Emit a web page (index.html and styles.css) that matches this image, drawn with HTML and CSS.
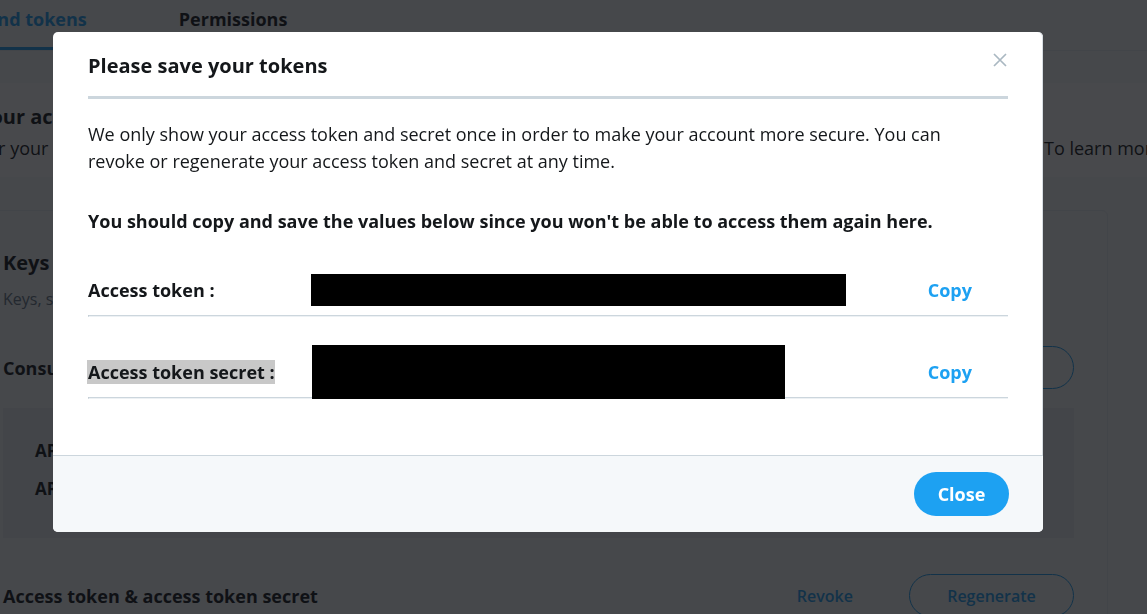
FILE: index.html
```html
<!DOCTYPE html>
<html lang="en">
<head>
<meta charset="utf-8">
<title>Keys and tokens</title>
<link rel="stylesheet" href="styles.css">
</head>
<body>
<div class="page">
  <nav class="tabs">
    <div class="tab tab-active">Keys and tokens</div>
    <div class="tab">Permissions</div>
  </nav>
  <section class="banner">
    <h2 class="banner-title">Your access token &amp; access token secret</h2>
    <div class="banner-sub">
      <span class="sub-left">For your security, we only show your access token and secret once after they are generated. Keep them somewhere safe.</span>
      <span class="sub-right">To learn more about access tokens, read our documentation.</span>
    </div>
  </section>
  <section class="card">
    <h3 class="card-title">Keys and tokens</h3>
    <p class="card-desc">Keys, secret keys and access tokens management.</p>
    <div class="card-row">
      <span class="row-title">Consumer API keys</span>
      <button class="btn-outline">Regenerate</button>
    </div>
    <div class="keys-box">
      <div class="key-line">API key:</div>
      <div class="key-line">API secret key:</div>
    </div>
    <div class="card-row card-row-last">
      <span class="row-title">Access token &amp; access token secret</span>
      <a class="link-revoke">Revoke</a>
      <button class="btn-outline">Regenerate</button>
    </div>
  </section>
</div>

<div class="overlay">
  <div class="modal">
    <div class="modal-header">
      <h1 class="modal-title">Please save your tokens</h1>
      <button class="modal-x" aria-label="Close">
        <svg width="14" height="14" viewBox="0 0 14 14"><path d="M1 1 L13 13 M13 1 L1 13" stroke="#aab8c2" stroke-width="1.7" fill="none"/></svg>
      </button>
    </div>
    <div class="modal-body">
      <p class="intro">We only show your access token and secret once in order to make your account more secure. You can revoke or regenerate your access token and secret at any time.</p>
      <p class="warning">You should copy and save the values below since you won't be able to access them again here.</p>
      <div class="token-row">
        <span class="token-label">Access token :</span>
        <span class="token-value token-value-1"></span>
        <a class="copy">Copy</a>
      </div>
      <hr class="row-rule">
      <div class="token-row">
        <span class="token-label"><span class="selected">Access token secret :</span></span>
        <span class="token-value token-value-2"></span>
        <a class="copy">Copy</a>
      </div>
      <hr class="row-rule">
    </div>
    <div class="modal-footer">
      <button class="btn-close">Close</button>
    </div>
  </div>
</div>
</body>
</html>
```
FILE: styles.css
```css
* { box-sizing: border-box; }

body {
  margin: 0;
  width: 1147px;
  height: 614px;
  overflow: hidden;
  background: #f5f8fa;
  color: #14171a;
  font-family: "Open Sans", "Noto Sans", sans-serif;
}

/* ---------- background page ---------- */
.page {
  margin-left: -60px;
  width: 1207px;
}

.tabs {
  display: flex;
  height: 51px;
  border-bottom: 1px solid #e6ecf0;
}

.tab {
  height: 50px;
  padding-top: 7px;
  font-size: 18px;
  line-height: 24px;
  font-weight: 700;
  color: #14171a;
}

.tab-active {
  color: #1da1f2;
  border-bottom: 3px solid #1da1f2;
  margin-right: 92px;
}

.banner {
  margin-top: 32px;
  background: #fff;
  padding: 20px 0 15px 38px;
}

.banner-title {
  margin: 0;
  font-size: 20px;
  line-height: 28px;
  font-weight: 700;
}

.banner-sub {
  display: flex;
  margin-top: 4px;
  font-size: 18px;
  line-height: 27px;
  white-space: nowrap;
}

.sub-left {
  flex: 0 0 1066px;
  overflow: hidden;
}

.card {
  margin: 33px 39px 0 28px;
  border: 1px solid #e6ecf0;
  border-radius: 6px;
  padding: 38px 33px 0 34px;
  height: 420px;
}

.card-title {
  margin: 0;
  font-size: 20px;
  line-height: 28px;
  font-weight: 700;
}

.card-desc {
  margin: 10px 0 0;
  font-size: 16px;
  line-height: 24px;
  color: #657786;
}

.card-row {
  display: flex;
  align-items: center;
  margin-top: 35px;
}

.card-row-last {
  margin-top: 36px;
}

.row-title {
  flex: 1;
  font-size: 18px;
  font-weight: 700;
}

.btn-outline {
  width: 165px;
  height: 43px;
  border: 1px solid #1da1f2;
  border-radius: 22px;
  background: transparent;
  color: #1da1f2;
  font-family: inherit;
  font-size: 16px;
  font-weight: 600;
}

.link-revoke {
  margin-right: 56px;
  color: #1da1f2;
  font-size: 16px;
  font-weight: 600;
}

.keys-box {
  margin-top: 19px;
  background: #e8edf1;
  padding: 31px 32px 37px;
}

.key-line {
  font-size: 17px;
  line-height: 24px;
  font-weight: 700;
}

.key-line + .key-line {
  margin-top: 14px;
}

/* ---------- modal ---------- */
.overlay {
  position: fixed;
  inset: 0;
  background: rgba(14, 16, 20, 0.76);
  display: flex;
  align-items: flex-start;
  padding: 32px 0 0 53px;
}

.modal {
  width: 990px;
  background: #fff;
  border-radius: 5px;
  overflow: hidden;
  box-shadow: inset -1px 0 0 #d8dee3;
}

.modal-header {
  margin: 0 35px;
  padding: 20px 0 16px;
  border-bottom: 3px solid #ccd6dd;
  display: flex;
  align-items: flex-start;
}

.modal-title {
  flex: 1;
  margin: 0;
  font-size: 20px;
  line-height: 28px;
  font-weight: 700;
}

.modal-x {
  margin: 1px 1px 0 0;
  padding: 0;
  border: 0;
  background: none;
  width: 14px;
  height: 14px;
  display: flex;
}

.modal-body {
  padding: 0 35px 56px;
  font-size: 18px;
  line-height: 27px;
}

.intro {
  margin: 22px 0 0;
  max-width: 880px;
}

.warning {
  margin: 33px 0 0;
  font-weight: 700;
}

.token-row {
  display: flex;
  align-items: center;
  padding: 42px 0 11px;
}

.token-label {
  flex: 0 0 223px;
  font-weight: 700;
}

.selected {
  background: #c8c8c8;
  padding-left: 1px;
  margin-left: -1px;
}

.token-value {
  display: block;
  background: #000;
}

.token-value-1 {
  width: 535px;
  height: 32px;
  margin: -3px 0 -2px;
}

.token-value-2 {
  width: 473px;
  height: 54px;
  margin: -14px 0 -13px 1px;
}

.copy {
  margin-left: auto;
  margin-right: 36px;
  color: #1da1f2;
  font-weight: 700;
}

.row-rule {
  margin: 0;
  height: 0;
  border: 0;
  border-top: 1px solid #ccd6dd;
  border-bottom: 1px solid #edf1f4;
  border-left: 1px solid #bcc6cd;
}

.modal-footer {
  border-top: 1px solid #ccd6dd;
  background: #f5f8fa;
  padding: 16px 34px 16px 0;
  display: flex;
  justify-content: flex-end;
}

.btn-close {
  width: 95px;
  height: 44px;
  border: 0;
  border-radius: 22px;
  background: #1da1f2;
  color: #fff;
  font-family: inherit;
  font-size: 18px;
  font-weight: 700;
}
```
